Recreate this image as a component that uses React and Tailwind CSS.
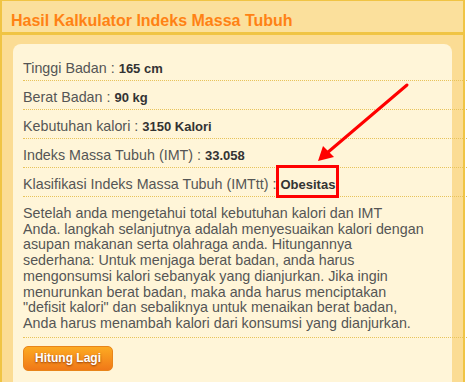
import React from 'react';

const rows = [
  { label: 'Tinggi Badan', value: '165 cm' },
  { label: 'Berat Badan', value: '90 kg' },
  { label: 'Kebutuhan kalori', value: '3150 Kalori' },
  { label: 'Indeks Massa Tubuh (IMT)', value: '33.058' },
];

const lines = [
  'Setelah anda mengetahui total kebutuhan kalori dan IMT',
  'Anda. langkah selanjutnya adalah menyesuaikan kalori dengan',
  'asupan makanan serta olahraga anda. Hitungannya',
  'sederhana: Untuk menjaga berat badan, anda harus',
  'mengonsumsi kalori sebanyak yang dianjurkan. Jika ingin',
  'menurunkan berat badan, maka anda harus menciptakan',
  '"defisit kalori" dan sebaliknya untuk menaikan berat badan,',
  'Anda harus menambah kalori dari konsumsi yang dianjurkan.',
];

const App = () => {
  return (
    <div className="relative w-[467px] h-[382px] overflow-hidden bg-white font-['Liberation_Sans',Arial,sans-serif]">
      {/* panel */}
      <div className="w-[465px] h-[382px] border-x-2 border-t border-[#f0c444] bg-[#fbdc94] flex flex-col">
        <div className="h-[34px] bg-[#fbe09c] border-b-[3px] border-[#f0c444] pl-[9px] pt-[10px]">
          <h1 className="text-[16px] leading-[20px] font-bold text-[#ff8214]">Hasil Kalkulator Indeks Massa Tubuh</h1>
        </div>

        <div className="flex-1 px-[11px] pt-[9px]">
          <div className="h-full bg-[#fff5d8] rounded-t-[8px] pt-[8px] pl-[10px] text-[14.3px] text-[#555]">
            {rows.map((r) => (
              <div key={r.label} className="w-[444px] h-[29px] pt-[7px] leading-[18px] border-b border-dotted border-[#e8c35a]">
                {r.label} : <b className="text-[13px] text-[#333]">{r.value}</b>
              </div>
            ))}
            <div className="w-[444px] h-[29px] pt-[7px] leading-[18px] border-b border-dotted border-[#e8c35a]">
              Klasifikasi Indeks Massa Tubuh (IMTtt) :{' '}
              <span className="relative inline-block align-top h-[18px] leading-[18px]">
                <b className="text-[13px] text-[#333]">Obesitas</b>
                <span className="absolute -left-[4px] -right-[4px] -top-[10px] -bottom-[5px] border-[3px] border-[#ff0000]" />
              </span>
            </div>
            <div className="w-[444px] pt-[9px] pb-[5px] border-b border-dotted border-[#e8c35a]">
              <p className="leading-[15.7px] whitespace-nowrap">
                {lines.map((l, i) => (
                  <React.Fragment key={i}>
                    {l}
                    {i < lines.length - 1 && <br />}
                  </React.Fragment>
                ))}
              </p>
            </div>
            <button className="mt-[8px] w-[90px] h-[25px] rounded-[5px] border border-[#e8851a] bg-gradient-to-b from-[#fcaa22] to-[#f07818] text-white text-[12px] font-bold [text-shadow:0_1px_2px_rgba(120,40,0,0.8)]">
              Hitung Lagi
            </button>
          </div>
        </div>
      </div>

      {/* annotation arrow */}
      <svg className="absolute left-0 top-0 pointer-events-none" width="467" height="382">
        <line x1="407" y1="85" x2="327" y2="153" stroke="#ff0000" strokeWidth="3" strokeLinecap="round" />
        <polygon points="318,161 323,146 334,157" fill="#ff0000" />
      </svg>
    </div>
  );
};

export default App;
